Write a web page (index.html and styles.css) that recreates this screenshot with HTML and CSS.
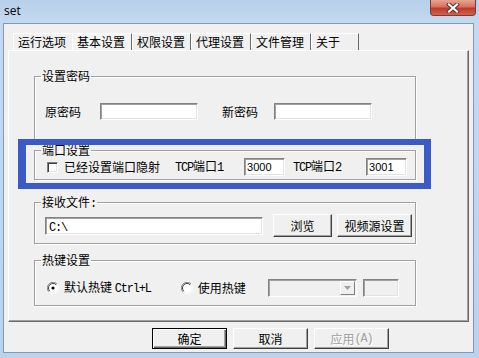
FILE: index.html
```html
<!DOCTYPE html>
<html>
<head>
<meta charset="utf-8">
<link rel="stylesheet" href="styles.css">
</head>
<body>
<div class="window">
  <div class="titlebar">
    <span class="title">set</span>
    <div class="close">
      <svg width="14" height="10" viewBox="0 0 14 10">
        <path d="M3 1.5 L11 8.5 M11 1.5 L3 8.5" stroke="#5a2a26" stroke-width="4" stroke-linecap="square"/>
        <path d="M3 1.5 L11 8.5 M11 1.5 L3 8.5" stroke="#ffffff" stroke-width="2.2" stroke-linecap="square"/>
      </svg>
    </div>
  </div>
  <div class="client">
    <div class="tabs">
      <div class="tab t1">运行选项</div>
      <div class="tab t2 active">基本设置</div>
      <div class="tab t3">权限设置</div>
      <div class="tab t4">代理设置</div>
      <div class="tab t5">文件管理</div>
      <div class="tab t6">关于</div>
    </div>
    <div class="panel">
      <fieldset class="group g1">
        <legend>设置密码</legend>
        <div class="row">
          <span class="lbl">原密码</span>
          <div class="edit pw1"></div>
          <span class="lbl nl">新密码</span>
          <div class="edit pw2"></div>
        </div>
      </fieldset>
      <fieldset class="group g2">
        <legend>端口设置</legend>
        <div class="row">
          <div class="check"></div>
          <span class="lbl cl">已经设置端口隐射</span>
          <span class="lbl tcp1"><span class="mono">TCP</span>端口<span class="mono">1</span></span>
          <div class="edit port p1">3000</div>
          <span class="lbl tcp2"><span class="mono">TCP</span>端口<span class="mono">2</span></span>
          <div class="edit port p2">3001</div>
        </div>
      </fieldset>
      <fieldset class="group g3">
        <legend>接收文件<span class="mono">:</span></legend>
        <div class="row">
          <div class="edit path"><span class="mono">C:\</span></div>
          <div class="btn browse">浏览</div>
          <div class="btn video">视频源设置</div>
        </div>
      </fieldset>
      <fieldset class="group g4">
        <legend>热键设置</legend>
        <div class="row">
          <svg class="radio r1" width="12" height="12" viewBox="0 0 12 12">
            <path d="M10.2 2.2 A5.5 5.5 0 0 0 1.8 9.8" fill="none" stroke="#808080"/>
            <path d="M1.8 9.8 A5.5 5.5 0 0 0 10.2 2.2" fill="none" stroke="#ffffff"/>
            <circle cx="6" cy="6" r="4.5" fill="#fff"/>
            <path d="M9.2 2.8 A4.5 4.5 0 0 0 2.8 9.2" fill="none" stroke="#404040"/>
            <circle cx="6" cy="6" r="1.6" fill="#000"/>
          </svg>
          <span class="lbl rl1">默认热键 <span class="mono">Ctrl+L</span></span>
          <svg class="radio r2" width="12" height="12" viewBox="0 0 12 12">
            <path d="M10.2 2.2 A5.5 5.5 0 0 0 1.8 9.8" fill="none" stroke="#808080"/>
            <path d="M1.8 9.8 A5.5 5.5 0 0 0 10.2 2.2" fill="none" stroke="#ffffff"/>
            <circle cx="6" cy="6" r="4.5" fill="#fff"/>
            <path d="M9.2 2.8 A4.5 4.5 0 0 0 2.8 9.2" fill="none" stroke="#404040"/>
          </svg>
          <span class="lbl rl2">使用热键</span>
          <div class="combo">
            <div class="dd">
              <svg width="7" height="4" viewBox="0 0 7 4"><path d="M0 0 H7 L3.5 4 Z" fill="#a0a0a0"/></svg>
            </div>
          </div>
          <div class="edit key"></div>
        </div>
      </fieldset>
      <div class="highlight"></div>
    </div>
    <div class="buttons">
      <div class="btn ok">确定</div>
      <div class="btn">取消</div>
      <div class="btn disabled">应用<span class="mono">(A)</span></div>
    </div>
  </div>
</div>
</body>
</html>
```

FILE: styles.css
```css
html, body {
  margin: 0;
  padding: 0;
  background: #c2d7ee;
}
.window {
  width: 479px;
  height: 358px;
  box-sizing: border-box;
  display: flex;
  flex-direction: column;
  background: linear-gradient(180deg, #b7cfea 0px, #c4d9f0 22px, #bcd2ec 358px);
  font-family: "Noto Sans CJK SC", "Liberation Sans", sans-serif;
  font-size: 12px;
  color: #000;
}
.titlebar {
  height: 23px;
  flex: none;
  display: flex;
  align-items: flex-start;
}
.title {
  font-family: "Open Sans", "Noto Sans", sans-serif;
  font-size: 12px;
  line-height: 16px;
  margin: 3px 0 0 4px;
  color: #000;
}
.close {
  margin-left: auto;
  margin-right: 3px;
  width: 46px;
  height: 16px;
  box-sizing: border-box;
  border: 1px solid #7c3a33;
  border-top: none;
  border-radius: 0 0 4px 4px;
  background: linear-gradient(180deg, #e7a493 0%, #d6735f 45%, #c0392b 55%, #d2624b 100%);
  display: flex;
  align-items: center;
  justify-content: center;
}
.client {
  flex: 1;
  margin: 0 5px 5px 3px;
  background: #f0f0f0;
  border: 1px solid #8698b0;
  display: flex;
  flex-direction: column;
}
.tabs {
  display: flex;
  margin: 9px 0 0 9px;
  height: 17px;
}
.tab {
  box-sizing: border-box;
  height: 17px;
  line-height: 15px;
  padding-left: 4px;
  border-top: 1px solid #fff;
  border-left: 1px solid #fff;
  border-right: 1px solid #696969;
  white-space: nowrap;
}
.t1 { width: 59px; border-right: none; }
.t2 { width: 60px; }
.t3 { width: 59px; }
.t4 { width: 60px; }
.t5 { width: 60px; }
.t6 { width: 48px; }
.tab.active { background: #f4f4f4; }
.panel {
  position: relative;
  margin-left: 4px;
  width: 461px;
  height: 272px;
  box-sizing: border-box;
  border-top: 1px solid #fff;
  border-left: 1px solid #fff;
  border-right: 1px solid #696969;
  border-bottom: 1px solid #696969;
  box-shadow: inset -1px -1px 0 #a0a0a0;
  padding-top: 18px;
  display: flex;
  flex-direction: column;
}
.group {
  margin: 0 0 0 25px;
  width: 382px;
  box-sizing: border-box;
  border: 1px solid #a0a0a0;
  box-shadow: 1px 1px 0 #fff, inset 1px 1px 0 #fff;
  padding: 0 0 0 10px;
  min-width: 0;
}
.group legend {
  margin-left: -4px;
  padding: 0 1px;
  line-height: 14px;
  height: 14px;
  font-size: 12px;
}
.g1 { padding-top: 20px; padding-bottom: 19px; }
.g2 { margin-top: 3px; padding-top: 1px; padding-bottom: 3px; }
.g3 { margin-top: 15px; padding-top: 5px; padding-bottom: 6px; }
.g4 { margin-top: 9px; padding-top: 12px; padding-bottom: 8px; }
.row {
  display: flex;
  align-items: center;
}
.lbl {
  white-space: nowrap;
  line-height: 14px;
}
.mono {
  font-family: "Liberation Mono", monospace;
  font-size: 12px;
  letter-spacing: -1.2px;
}
.edit {
  box-sizing: border-box;
  background: #fff;
  border: 1px solid;
  border-color: #828282 #fff #fff #828282;
  box-shadow: inset 1px 1px 0 #a0a0a0, inset -1px -1px 0 #e3e3e3;
  height: 17px;
}
.pw1 { width: 98px; margin-left: 19px; }
.nl { margin-left: 24px; }
.pw2 { width: 98px; margin-left: 16px; }
.check {
  width: 11px;
  height: 11px;
  box-sizing: border-box;
  margin-left: 2px;
  background: #fff;
  border: 1px solid;
  border-color: #808080 #fff #fff #808080;
  box-shadow: inset 1px 1px 0 #404040, inset -1px -1px 0 #e3e3e3;
}
.cl { margin-left: 6px; }
.tcp1 { margin-left: 15px; }
.port {
  width: 41px;
  height: 18px;
  font-family: "Liberation Sans", sans-serif;
  font-size: 11px;
  line-height: 16px;
  padding-left: 2px;
}
.p1 { margin-left: 21px; }
.tcp2 { margin-left: 8px; }
.p2 { margin-left: 25px; }
.path {
  width: 218px;
  height: 18px;
  line-height: 16px;
  padding-left: 3px;
}
.btn {
  box-sizing: border-box;
  width: 75px;
  height: 21px;
  background: #f0f0f0;
  border: 1px solid;
  border-color: #fff #404040 #404040 #fff;
  box-shadow: inset -1px -1px 0 #a0a0a0;
  display: flex;
  align-items: center;
  justify-content: center;
  line-height: 14px;
}
.browse { width: 59px; height: 23px; margin-left: 10px; }
.video { width: 75px; height: 23px; margin-left: 5px; }
.radio { flex: none; margin-left: 2px; }
.rl1 { margin-left: 5px; }
.r2 { margin-left: 30px; }
.rl2 { margin-left: 5px; }
.combo {
  margin-left: 22px;
  width: 89px;
  height: 18px;
  box-sizing: border-box;
  background: #f0f0f0;
  border: 1px solid;
  border-color: #828282 #fff #fff #828282;
  box-shadow: inset 1px 1px 0 #a0a0a0;
  display: flex;
  justify-content: flex-end;
  padding: 1px;
}
.dd {
  width: 15px;
  box-sizing: border-box;
  border: 1px solid;
  border-color: #fff #808080 #808080 #fff;
  background: #f0f0f0;
  display: flex;
  align-items: center;
  justify-content: center;
}
.key {
  margin-left: 6px;
  width: 36px;
  height: 18px;
  background: #f0f0f0;
}
.highlight {
  position: absolute;
  left: 9px;
  top: 88px;
  width: 413px;
  height: 50px;
  box-sizing: border-box;
  border-style: solid;
  border-color: #3b5ac8;
  border-width: 6px 7px 6px 8px;
}
.buttons {
  display: flex;
  margin: 6px 0 0 148px;
  gap: 6px;
}
.btn.ok {
  border-color: #000;
  box-shadow: inset 1px 1px 0 #fff, inset -1px -1px 0 #696969, inset -2px -2px 0 #a0a0a0;
}
.btn.disabled {
  color: #a0a0a0;
  text-shadow: 1px 1px 0 #fff;
}
```
